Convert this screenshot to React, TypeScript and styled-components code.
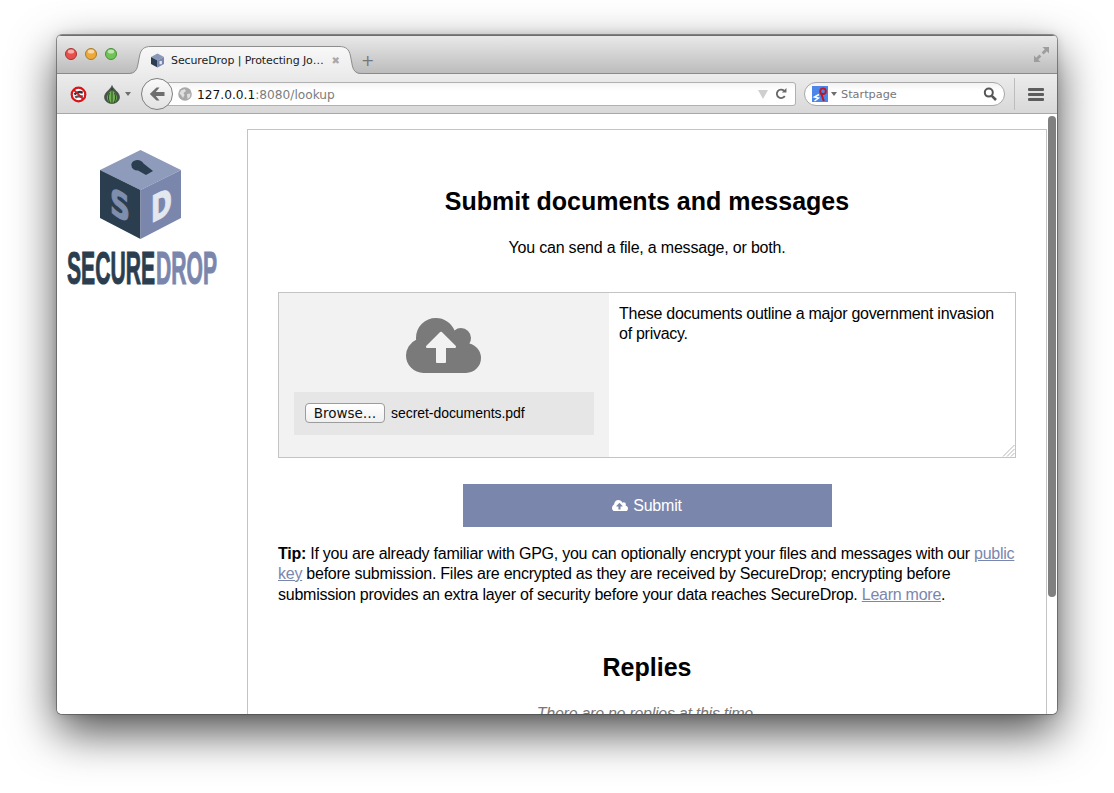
import styled, { createGlobalStyle } from "styled-components";

const navy = "#2a3e50";
const slate = "#7b86ad";
const cloudPath =
  "M1280 864q0-14-9-23l-352-352q-9-9-23-9t-23 9l-351 351q-10 12-10 24 0 14 9 23t23 9h224v352q0 13 9.5 22.5t22.5 9.5h192q13 0 22.5-9.5t9.5-22.5v-352h224q13 0 22.5-9.5t9.5-22.5zm640 288q0 159-112.5 271.5t-271.5 112.5h-1088q-185 0-316.5-131.5t-131.5-316.5q0-130 70-240t188-165q-2-30-2-43 0-212 150-362t362-150q156 0 285.5 87t188.5 231q71-62 166-62 106 0 181 75t75 181q0 76-41 138 130 31 213.5 135.5t83.5 238.5z";

const CloudIcon = ({ size }: { size: number }) => (
  <svg width={size} height={(size * 1408) / 1920} viewBox="0 128 1920 1408" fill="currentColor">
    <path d={cloudPath} />
  </svg>
);

const TrafficLight = ({ color, edge }: { color: string; edge: string }) => (
  <svg width="12" height="12" viewBox="0 0 12 12">
    <circle cx="6" cy="6" r="5.5" fill={color} stroke={edge} />
    <ellipse cx="6" cy="3.4" rx="3.2" ry="2" fill="#fff" opacity="0.55" />
  </svg>
);

const CubeFavicon = () => (
  <svg width="15" height="15" viewBox="0 0 15 15">
    <path d="M7.5 0.5 14 4 7.5 7.5 1 4z" fill="#8a97b8" />
    <path d="M1 4 7.5 7.5V14.5L1 11z" fill={navy} />
    <path d="M14 4 7.5 7.5V14.5L14 11z" fill={slate} />
    <rect x="9.5" y="8" width="2.4" height="3.2" fill="#dfe4ee" />
  </svg>
);

const NoFlashIcon = () => (
  <svg width="17" height="17" viewBox="0 0 17 17">
    <circle cx="8.5" cy="8.5" r="6.8" fill="#fff" stroke="#d8141c" strokeWidth="2.2" />
    <path d="M3.8 7.5Q8 3.5 13 5.5L12.5 7.8Q8 6.3 5 9.5z" fill="#333" />
    <path d="M4.5 10.5Q8 8 13.5 9.5L12 12Q8 10.6 6 12.5z" fill="#555" />
    <path d="M3.8 3.8 13.2 13.2" stroke="#d8141c" strokeWidth="1.8" />
  </svg>
);

const OnionIcon = () => (
  <svg width="18" height="19" viewBox="0 0 18 19">
    <path d="M9 0.5C9.5 4 16.5 7 16.5 12C16.5 16 13 18.5 9 18.5C5 18.5 1.5 16 1.5 12C1.5 7 8.5 4 9 0.5z" fill="#48564a" stroke="#3a433a" strokeWidth="0.6" />
    <path d="M9 5C12 8 14.5 10 13.8 14C13 17 11 18 9 18C7 18 5 17 4.2 14C3.5 10 6 8 9 5z" fill="#6fb450" />
    <path d="M9 3V18M6.5 8C5 10.5 5 15 7 18M11.5 8C13 10.5 13 15 11 18" stroke="#1f2b1f" strokeWidth="0.8" fill="none" />
  </svg>
);

const BackArrow = () => (
  <svg width="16" height="14" viewBox="0 0 16 14">
    <path d="M7.5 0.5 0.8 7 7.5 13.5H10.5L6.8 9H15.5V5H6.8L10.5 0.5z" fill="#6e6e6e" />
  </svg>
);

const GlobeIcon = () => (
  <svg width="14" height="14" viewBox="0 0 14 14">
    <circle cx="7" cy="7" r="6.8" fill="#a9a9a9" />
    <path d="M3 3.5 6.5 2 8 4 5.5 6 6.5 8 5 11 3 8 1.5 6.5zM9 7 12.5 6.5 12 10 9.5 12z" fill="#e0e0e0" />
  </svg>
);

const ReloadIcon = () => (
  <svg width="12" height="12" viewBox="0 0 13 13">
    <path d="M10.6 8.6A4.6 4.6 0 1 1 9.8 3" fill="none" stroke="#686868" strokeWidth="2" />
    <path d="M7.4 4.9 12.4 5V0z" fill="#686868" />
  </svg>
);

const StartpageIcon = () => (
  <svg width="16" height="16" viewBox="0 0 16 16">
    <rect width="16" height="16" fill="#4b86e8" />
    <circle cx="11" cy="5.2" r="2.8" fill="none" stroke="#c01622" strokeWidth="1.9" />
    <path d="M9 7 11.8 15" stroke="#c01622" strokeWidth="2" />
    <path d="M7 8.5 2.5 11 6.5 12 2.5 15" fill="none" stroke="#fff" strokeWidth="1.5" />
  </svg>
);

const SearchGlass = () => (
  <svg width="14" height="14" viewBox="0 0 14 14">
    <circle cx="5.8" cy="5.6" r="4" fill="none" stroke="#555" strokeWidth="2" />
    <path d="M8.8 8.8 13 13" stroke="#555" strokeWidth="2.6" />
  </svg>
);

const ExpandIcon = () => (
  <svg width="15" height="15" viewBox="0 0 15 15" fill="#9d9d9d">
    <path d="M8.5 0H15V6.5L12.8 4.3 9.6 7.4 7.7 5.5 10.8 2.2z" />
    <path d="M6.5 15H0V8.5L2.2 10.7 5.4 7.6 7.3 9.5 4.2 12.8z" />
  </svg>
);

const Logo = () => (
  <svg width="150" height="135" viewBox="0 0 150 135">
    <path d="M73.5 0 114 20 73.5 40 33 20z" fill="#8f9bbb" />
    <path d="M33 20 73.5 40V89L33 68z" fill={navy} />
    <path d="M114 20 73.5 40V89L114 68z" fill={slate} />
    <path d="M64.5 16a6 4.5 0 0 1 12 -2.5L86 21 79 25 71 20.5a6 4.5 0 0 1 -6.5 -4.5z" fill={navy} />
    <LogoMark transform="matrix(0.77 0.385 0 1 43 63)" fill="#7f8ead" stroke="#7f8ead">
      S
    </LogoMark>
    <LogoMark transform="matrix(0.7 -0.35 0 1 84 73)" fill="#e3e7ef" stroke="#e3e7ef">
      D
    </LogoMark>
    <LogoWord x="0" y="134" fill={navy} stroke={navy} textLength="88" lengthAdjust="spacingAndGlyphs">
      SECURE
    </LogoWord>
    <LogoWord x="89" y="134" fill={slate} stroke={slate} textLength="61" lengthAdjust="spacingAndGlyphs">
      DROP
    </LogoWord>
  </svg>
);

const ResizeGrip = () => (
  <Grip width="13" height="13" viewBox="0 0 13 13">
    <path d="M1 12.5 12.5 1M5 12.5 12.5 5M9 12.5 12.5 9" stroke="#b5b5b5" strokeWidth="1" />
  </Grip>
);

export default function App() {
  return (
    <>
      <GlobalStyle />
      <Desktop>
        <BrowserWindow>
          <TitleBar>
            <Lights>
              <TrafficLight color="#e9504b" edge="#a8332f" />
              <TrafficLight color="#eda93a" edge="#ab7a28" />
              <TrafficLight color="#6fc455" edge="#4a8f38" />
            </Lights>
            <Tab>
              <TabShape viewBox="0 0 234 28">
                <defs>
                  <linearGradient id="tabFill" x1="0" y1="0" x2="0" y2="1">
                    <stop offset="0" stopColor="#f8f8f8" />
                    <stop offset="1" stopColor="#ececec" />
                  </linearGradient>
                </defs>
                <path
                  d="M0 28C7 28 9 24 10 18L11.5 10C13 3 16 0.5 23 0.5H211C218 0.5 221 3 222.5 10L224 18C225 24 227 28 234 28z"
                  fill="url(#tabFill)"
                />
                <path
                  d="M0 27.5C7 27.5 9 24 10 18L11.5 10C13 3 16 0.5 23 0.5H211C218 0.5 221 3 222.5 10L224 18C225 24 227 27.5 234 27.5"
                  fill="none"
                  stroke="#8d8d8d"
                />
              </TabShape>
              <CubeFavicon />
              <TabTitle>SecureDrop | Protecting Jo…</TabTitle>
              <TabClose>✖</TabClose>
            </Tab>
            <NewTab>+</NewTab>
            <Expand>
              <ExpandIcon />
            </Expand>
          </TitleBar>
          <Toolbar>
            <NoFlashIcon />
            <OnionWrap>
              <OnionIcon />
              <Caret />
            </OnionWrap>
            <BackButton>
              <BackArrow />
            </BackButton>
            <UrlBar>
              <GlobeIcon />
              <UrlText>
                127.0.0.1<UrlRest>:8080/lookup</UrlRest>
              </UrlText>
              <UrlTools>
                <UrlDown />
                <ReloadIcon />
              </UrlTools>
            </UrlBar>
            <SearchBar>
              <StartpageIcon />
              <Caret />
              <SearchText>Startpage</SearchText>
              <SearchGlass />
            </SearchBar>
            <ToolbarDivider />
            <Hamburger>
              <span />
              <span />
              <span />
            </Hamburger>
          </Toolbar>
          <Viewport>
            <Sidebar>
              <Logo />
            </Sidebar>
            <Panel>
              <Title>Submit documents and messages</Title>
              <Lead>You can send a file, a message, or both.</Lead>
              <FormBox>
                <UploadPane>
                  <UploadCloud>
                    <CloudIcon size={75} />
                  </UploadCloud>
                  <FileRow>
                    <BrowseButton type="button">Browse…</BrowseButton>
                    <FileName>secret-documents.pdf</FileName>
                  </FileRow>
                </UploadPane>
                <Message defaultValue="These documents outline a major government invasion of privacy." />
                <ResizeGrip />
              </FormBox>
              <SubmitRow>
                <SubmitButton type="button">
                  <CloudIcon size={16} />
                  Submit
                </SubmitButton>
              </SubmitRow>
              <Tip>
                <strong>Tip:</strong> If you are already familiar with GPG, you can optionally encrypt your files and
                messages with our <a href="#key">public key</a> before submission. Files are encrypted as they are
                received by SecureDrop; encrypting before submission provides an extra layer of security before your
                data reaches SecureDrop. <a href="#more">Learn more</a>.
              </Tip>
              <Replies>Replies</Replies>
              <NoReplies>There are no replies at this time.</NoReplies>
            </Panel>
            <ScrollTrack>
              <ScrollThumb />
            </ScrollTrack>
          </Viewport>
        </BrowserWindow>
      </Desktop>
    </>
  );
}

const GlobalStyle = createGlobalStyle`
  html, body {
    margin: 0;
    height: 100%;
    background: #fff;
  }
  * {
    box-sizing: border-box;
  }
`;

const Desktop = styled.div`
  height: 793px;
  padding: 35px 57px 79px;
  overflow: hidden;
  background: #fff;
`;

const BrowserWindow = styled.div`
  width: 1000px;
  height: 679px;
  display: flex;
  flex-direction: column;
  overflow: hidden;
  border-radius: 5px;
  background: #fff;
  box-shadow: 0 0 0 1px rgba(70, 70, 70, 0.55), 0 18px 46px rgba(0, 0, 0, 0.7), 0 0 10px rgba(0, 0, 0, 0.15);
`;

const LogoMark = styled.text`
  font-family: "DejaVu Sans", sans-serif;
  font-weight: 700;
  font-size: 36px;
  stroke-width: 1.2;
`;

const LogoWord = styled.text`
  font-family: "Liberation Sans Narrow", "Liberation Sans", sans-serif;
  font-weight: 700;
  font-size: 47px;
  stroke-width: 1.1;
`;

const TitleBar = styled.div`
  height: 39px;
  flex: none;
  display: flex;
  align-items: flex-end;
  padding-left: 8px;
  background: linear-gradient(#e9e9e9, #bcbcbc);
  border-top: 1px solid #6e6e6e;
  border-bottom: 1px solid #8a8a8a;
`;

const Lights = styled.div`
  display: flex;
  gap: 8px;
  align-self: flex-start;
  margin-top: 12px;
`;

const Tab = styled.div`
  position: relative;
  width: 234px;
  height: 28px;
  margin-left: 11px;
  margin-bottom: -1px;
  padding: 0 22px;
  display: flex;
  align-items: center;
  gap: 6px;
`;

const TabShape = styled.svg`
  position: absolute;
  inset: 0;
  width: 100%;
  height: 100%;
  & + svg,
  & ~ span {
    position: relative;
  }
`;

const TabTitle = styled.span`
  font: 11px "DejaVu Sans", sans-serif;
  letter-spacing: -0.1px;
  color: #222;
  white-space: nowrap;
  flex: 1;
`;

const TabClose = styled.span`
  font: 10px "DejaVu Sans", sans-serif;
  color: #a9a9a9;
`;

const NewTab = styled.span`
  font: 16px/16px "DejaVu Sans", sans-serif;
  color: #777;
  margin: 0 0 4px -1px;
`;

const Expand = styled.div`
  margin-left: auto;
  margin-right: 8px;
  align-self: flex-start;
  margin-top: 11px;
`;

const Toolbar = styled.div`
  height: 40px;
  flex: none;
  display: flex;
  align-items: center;
  padding: 1px 0 0 13px;
  background: linear-gradient(#ececec, #d8d8d8);
  border-bottom: 1px solid #a8a8a8;
`;

const OnionWrap = styled.div`
  display: flex;
  align-items: center;
  gap: 4px;
  margin-left: 16px;
`;

const Caret = styled.span`
  width: 0;
  height: 0;
  flex: none;
  border-left: 3.5px solid transparent;
  border-right: 3.5px solid transparent;
  border-top: 4px solid #6e6e6e;
`;

const BackButton = styled.div`
  width: 32px;
  height: 32px;
  flex: none;
  position: relative;
  z-index: 1;
  margin-left: 10px;
  display: flex;
  align-items: center;
  justify-content: center;
  border-radius: 50%;
  border: 1px solid #7e7e7e;
  background: linear-gradient(#fafafa, #e2e2e2);
`;

const UrlBar = styled.div`
  width: 630px;
  height: 24px;
  flex: none;
  margin-left: -7px;
  padding: 0 8px 0 11px;
  display: flex;
  align-items: center;
  gap: 5px;
  border: 1px solid #b0b0b0;
  border-radius: 3px;
  background: linear-gradient(#f4f4f4, #fff 35%);
`;

const UrlText = styled.span`
  font: 12.2px "DejaVu Sans", sans-serif;
  color: #111;
  white-space: nowrap;
  padding-top: 1px;
`;

const UrlRest = styled.span`
  color: #7c7c7c;
`;

const UrlTools = styled.div`
  margin-left: auto;
  display: flex;
  align-items: center;
  gap: 7px;
`;

const UrlDown = styled.span`
  width: 0;
  height: 0;
  border-left: 5.5px solid transparent;
  border-right: 5.5px solid transparent;
  border-top: 9px solid #cfcfcf;
`;

const SearchBar = styled.div`
  width: 201px;
  height: 24px;
  flex: none;
  margin-left: 8px;
  padding: 0 7px;
  display: flex;
  align-items: center;
  gap: 3px;
  border: 1px solid #a8a8a8;
  border-radius: 13px;
  background: linear-gradient(#f2f2f2, #fff 35%);
`;

const SearchText = styled.span`
  font: 11.3px "DejaVu Sans", sans-serif;
  color: #777;
  flex: 1;
  margin-left: 1px;
  padding-top: 1px;
`;

const ToolbarDivider = styled.span`
  width: 1px;
  height: 32px;
  margin-left: 9px;
  background: #bdbdbd;
`;

const Hamburger = styled.div`
  margin-left: 13px;
  width: 16px;
  display: flex;
  flex-direction: column;
  gap: 2px;
  & > span {
    height: 3px;
    background: #5d5d5d;
    border-radius: 1px;
  }
`;

const Viewport = styled.div`
  flex: 1;
  min-height: 0;
  display: flex;
  overflow: hidden;
  background: #fff;
`;

const Sidebar = styled.div`
  width: 190px;
  flex: none;
  padding: 36px 0 0 10px;
`;

const Panel = styled.main`
  width: 800px;
  flex: none;
  height: 720px;
  margin-top: 15px;
  padding: 0 30px;
  border: 1px solid #c4c4c4;
  font: 16px/20.5px "Liberation Sans", Arial, sans-serif;
  letter-spacing: -0.2px;
  color: #000;
  a {
    color: ${slate};
  }
`;

const Title = styled.h1`
  margin: 55px 0 0;
  font-size: 25px;
  line-height: 32px;
  font-weight: 700;
  letter-spacing: 0;
  text-align: center;
`;

const Lead = styled.p`
  margin: 21px 0 0;
  text-align: center;
`;

const FormBox = styled.div`
  position: relative;
  height: 166px;
  margin-top: 33px;
  display: flex;
  border: 1px solid #c4c4c4;
`;

const UploadPane = styled.div`
  width: 330px;
  flex: none;
  padding: 25px 15px 0;
  background: #f2f2f2;
`;

const UploadCloud = styled.div`
  display: flex;
  justify-content: center;
  color: #7a7a7a;
  padding-right: 2px;
`;

const FileRow = styled.div`
  height: 43px;
  margin-top: 19px;
  padding-left: 11px;
  display: flex;
  align-items: center;
  gap: 6px;
  background: #e6e6e6;
`;

const BrowseButton = styled.button`
  width: 80px;
  height: 20px;
  padding: 0;
  border: 1px solid #9c9c9c;
  border-radius: 4px;
  background: linear-gradient(#fff, #f0f0f0);
  font: 13.5px "DejaVu Sans", sans-serif;
  color: #111;
`;

const FileName = styled.span`
  font-size: 14px;
  letter-spacing: -0.05px;
`;

const Message = styled.textarea`
  flex: 1;
  display: block;
  padding: 11px 10px 10px;
  border: 0;
  outline: 0;
  resize: none;
  font: 16px/20.5px "Liberation Sans", Arial, sans-serif;
  letter-spacing: -0.27px;
  color: #000;
  background: #fff;
`;

const Grip = styled.svg`
  position: absolute;
  right: 0;
  bottom: 0;
`;

const SubmitRow = styled.div`
  display: flex;
  justify-content: center;
  margin-top: 26px;
`;

const SubmitButton = styled.button`
  width: 369px;
  height: 43px;
  padding: 1px 0 0;
  display: flex;
  align-items: center;
  justify-content: center;
  gap: 5px;
  border: 0;
  background: ${slate};
  color: #fff;
  font: 16px "Liberation Sans", Arial, sans-serif;
  letter-spacing: -0.2px;
`;

const Tip = styled.p`
  margin: 17px 0 0;
  letter-spacing: -0.25px;
`;

const Replies = styled.h2`
  margin: 46px 0 0;
  font-size: 25px;
  line-height: 32px;
  font-weight: 700;
  letter-spacing: 0;
  text-align: center;
`;

const NoReplies = styled.p`
  margin: 21px 0 0;
  text-align: center;
  font-style: italic;
  letter-spacing: -0.27px;
  color: #777;
`;

const ScrollTrack = styled.div`
  width: 10px;
  flex: none;
  padding: 2px 1px 0;
`;

const ScrollThumb = styled.div`
  height: 481px;
  border-radius: 4px;
  background: #808080;
`;
